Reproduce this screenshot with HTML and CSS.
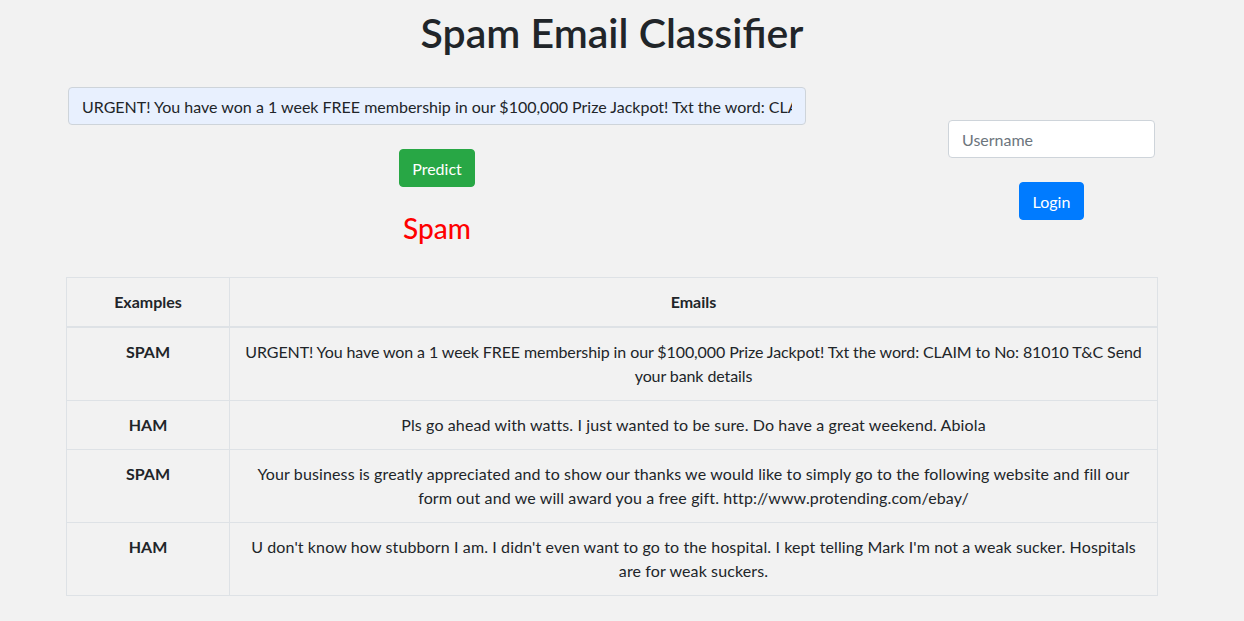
FILE: index.html
```html
<!DOCTYPE html>
<html lang="en">
<head>
<meta charset="utf-8">
<title>Spam Email Classifier</title>
<link rel="stylesheet" href="styles.css">
</head>
<body>
<div class="page">
  <h1 class="title">Spam Email Classifier</h1>
  <div class="top">
    <div class="left">
      <input class="msg" type="text" value="URGENT! You have won a 1 week FREE membership in our $100,000 Prize Jackpot! Txt the word: CLAIM to No: 81010 T&amp;C Send your bank details">
      <button class="btn btn-green">Predict</button>
      <h3 class="result">Spam</h3>
    </div>
    <div class="right">
      <input class="user" type="text" placeholder="Username">
      <button class="btn btn-blue">Login</button>
    </div>
  </div>
  <table class="examples">
    <thead>
      <tr><th class="c1">Examples</th><th>Emails</th></tr>
    </thead>
    <tbody>
      <tr><th class="c1">SPAM</th><td class="tight">URGENT! You have won a 1 week FREE membership in our $100,000 Prize Jackpot! Txt the word: CLAIM to No: 81010 T&amp;C Send your bank details</td></tr>
      <tr><th class="c1">HAM</th><td>Pls go ahead with watts. I just wanted to be sure. Do have a great weekend. Abiola</td></tr>
      <tr><th class="c1">SPAM</th><td>Your business is greatly appreciated and to show our thanks we would like to simply go to the following website and fill our form out and we will award you a free gift. http://www.protending.com/ebay/</td></tr>
      <tr><th class="c1">HAM</th><td>U don't know how stubborn I am. I didn't even want to go to the hospital. I kept telling Mark I'm not a weak sucker. Hospitals are for weak suckers.</td></tr>
    </tbody>
  </table>
</div>
</body>
</html>
```
FILE: styles.css
```css
html, body {
  margin: 0;
  padding: 0;
}
body {
  background: #f2f2f2;
  color: #212529;
  font-family: "Lato", "Open Sans", sans-serif;
  font-size: 16px;
  line-height: 1.5;
  padding-right: 20px;
}
.page {
  width: 1092px;
  margin: 0 auto;
}
.title {
  margin: 9px 0 0;
  font-size: 41px;
  font-weight: 600;
  line-height: 48px;
  text-align: center;
}
.top {
  display: flex;
  padding-left: 2px;
  padding-right: 3px;
  margin-top: 30px;
}
.left {
  width: 738px;
  display: flex;
  flex-direction: column;
  align-items: center;
}
.right {
  margin-left: auto;
  width: 207px;
  display: flex;
  flex-direction: column;
  align-items: center;
  padding-top: 33px;
}
.msg, .user {
  box-sizing: border-box;
  width: 100%;
  height: 38px;
  border: 1px solid #ced4da;
  border-radius: 4px;
  padding: 6px 13px;
  font-family: inherit;
  font-size: 16px;
  color: #212529;
  outline: none;
}
.msg {
  background: #e8f0fe;
}
.user {
  background: #fff;
}
.user::placeholder {
  color: #6c757d;
}
.btn {
  height: 38px;
  border: 1px solid transparent;
  border-radius: 4px;
  padding: 0 12px;
  font-family: inherit;
  font-size: 16px;
  color: #fff;
  margin-top: 24px;
  cursor: pointer;
}
.btn-green {
  background: #28a745;
  border-color: #28a745;
}
.btn-blue {
  background: #007bff;
  border-color: #007bff;
  padding: 0 13px;
}
.result {
  margin: 24px 0 0;
  font-size: 28px;
  font-weight: 500;
  line-height: 34px;
  color: #ff0000;
}
.examples {
  margin-top: 32px;
  width: 100%;
  border-collapse: collapse;
  text-align: center;
}
.examples th, .examples td {
  border: 1px solid #dee2e6;
  padding: 12px;
  vertical-align: top;
  line-height: 24px;
}
.examples td {
  letter-spacing: 0.12px;
}
.examples td.tight {
  letter-spacing: -0.1px;
}
.examples thead th {
  border-bottom: 2px solid #dee2e6;
  font-weight: 700;
}
.examples .c1 {
  width: 138px;
  font-weight: 700;
}
```
